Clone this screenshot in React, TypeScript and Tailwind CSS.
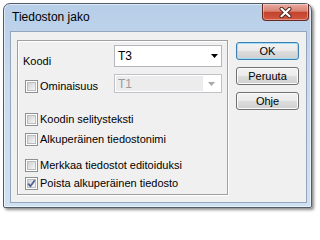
import { FC } from "react";

const Check: FC<{ checked?: boolean }> = ({ checked }) => (
    <span className="relative flex h-[13px] w-[13px] shrink-0 items-center justify-center border border-[#8e8f8f] bg-white">
        <span className="h-[9px] w-[9px] border border-[#b9bcc0] bg-[linear-gradient(135deg,#cfd1d4,#f6f6f6)]" />
        {checked && (
            <svg className="absolute left-0 top-0" width="11" height="11" viewBox="0 0 11 11">
                <path d="M2.2 5.6 L4.4 8.3 L8.8 2.2" fill="none" stroke="#4a5f8f" strokeWidth="1.7" strokeLinejoin="round" />
            </svg>
        )}
    </span>
);

const CheckRow: FC<{ label: string; checked?: boolean; className?: string }> = ({ label, checked, className }) => (
    <div className={`flex h-[13px] items-center gap-[2px] ${className ?? ""}`}>
        <Check checked={checked} />
        <span className="whitespace-nowrap text-[11px] leading-[13px] text-black">{label}</span>
    </div>
);

const Button: FC<{ label: string; primary?: boolean }> = ({ label, primary }) => (
    <button
        type="button"
        className={`flex h-[18px] w-[63px] items-center justify-center rounded-[3px] border text-[11px] leading-[13px] text-black bg-[linear-gradient(#f2f2f2_0%,#ebebeb_48%,#dddddd_52%,#cfcfcf_100%)] ${
            primary
                ? "border-[#3c7fb1] shadow-[inset_0_0_0_1px_#9fdcf8]"
                : "border-[#707070] shadow-[inset_0_0_0_1px_#fbfbfb]"
        }`}
    >
        {label}
    </button>
);

const App: FC = () => {
    return (
        <div className="h-[215px] w-[317px] overflow-hidden bg-white pl-[3px] pt-[3px] font-['Liberation_Sans',Arial,sans-serif]">
            <div className="flex h-[205px] w-[309px] flex-col rounded-t-[7px] rounded-b-[2px] border border-[#525c68] bg-[linear-gradient(#b7cee8,#c9dbef_40%,#cfe0f2)] shadow-[inset_0_0_0_1px_rgba(255,255,255,0.55),2px_2px_3px_rgba(0,0,0,0.45)]">
                {/* title bar */}
                <div className="flex h-[27px] items-start justify-between">
                    <span className="pl-[8px] pt-[6px] text-[12px] leading-[14px] text-black">Tiedoston jako</span>
                    <div className="mr-[2px] flex h-[17px] w-[47px] items-center justify-center rounded-b-[4px] border border-t-0 border-[#6a2a22] bg-[linear-gradient(#e8aa9e_0%,#d98474_45%,#c4432d_52%,#d2573f_100%)] shadow-[inset_0_0_0_1px_rgba(255,255,255,0.35)]">
                        <svg width="13" height="11" viewBox="0 0 13 11">
                            <path d="M2.5 1.8 L10.5 9.2 M10.5 1.8 L2.5 9.2" stroke="#4b2520" strokeWidth="4" strokeLinecap="round" />
                            <path d="M2.5 1.8 L10.5 9.2 M10.5 1.8 L2.5 9.2" stroke="#ffffff" strokeWidth="2.2" strokeLinecap="round" />
                        </svg>
                    </div>
                </div>

                {/* client area */}
                <div className="mb-[4px] ml-[6px] mr-[4px] flex flex-1 border border-[#95a6ba] bg-[#f0f0f0] pl-[6px] pt-[8px]">
                    <div className="flex h-[155px] w-[211px] flex-col border border-[#a0a0a0] pl-[5px] pt-[4px] shadow-[inset_1px_1px_0_#fff,1px_1px_0_#fff]">
                        <div className="flex">
                            <span className="mt-[10px] w-[91px] text-[11px] leading-[13px] text-black">Koodi</span>
                            <div className="flex h-[22px] w-[108px] items-center justify-between border border-[#b4b7bc] bg-white pl-[3px] pr-[3px]">
                                <span className="text-[12px] leading-[14px] text-black">T3</span>
                                <svg width="7" height="4" viewBox="0 0 7 4">
                                    <polygon points="0,0 7,0 3.5,4" fill="#000" />
                                </svg>
                            </div>
                        </div>

                        <div className="mt-[6px] flex">
                            <div className="w-[91px] pl-[2px] pt-[6px]">
                                <CheckRow label="Ominaisuus" />
                            </div>
                            <div className="flex h-[19px] w-[108px] border border-[#bfc2c6] bg-white p-[1px]">
                                <div className="flex flex-1 items-center bg-[#ececec] pl-[2px]">
                                    <span className="text-[12px] leading-[14px] text-[#9a9a9a]">T1</span>
                                </div>
                                <div className="flex w-[17px] items-center justify-center">
                                    <svg width="7" height="4" viewBox="0 0 7 4">
                                        <polygon points="0,0 7,0 3.5,4" fill="#a8a8a8" />
                                    </svg>
                                </div>
                            </div>
                        </div>

                        <CheckRow className="ml-[2px] mt-[20px]" label="Koodin selitysteksti" />
                        <CheckRow className="ml-[2px] mt-[7px]" label="Alkuperäinen tiedostonimi" />
                        <CheckRow className="ml-[2px] mt-[13px]" label="Merkkaa tiedostot editoiduksi" />
                        <CheckRow className="ml-[2px] mt-[5px]" label="Poista alkuperäinen tiedosto" checked />
                    </div>

                    <div className="ml-[8px] mt-[2px] flex flex-col gap-[7px]">
                        <Button label="OK" primary />
                        <Button label="Peruuta" />
                        <Button label="Ohje" />
                    </div>
                </div>
            </div>
        </div>
    );
};

export default App;
